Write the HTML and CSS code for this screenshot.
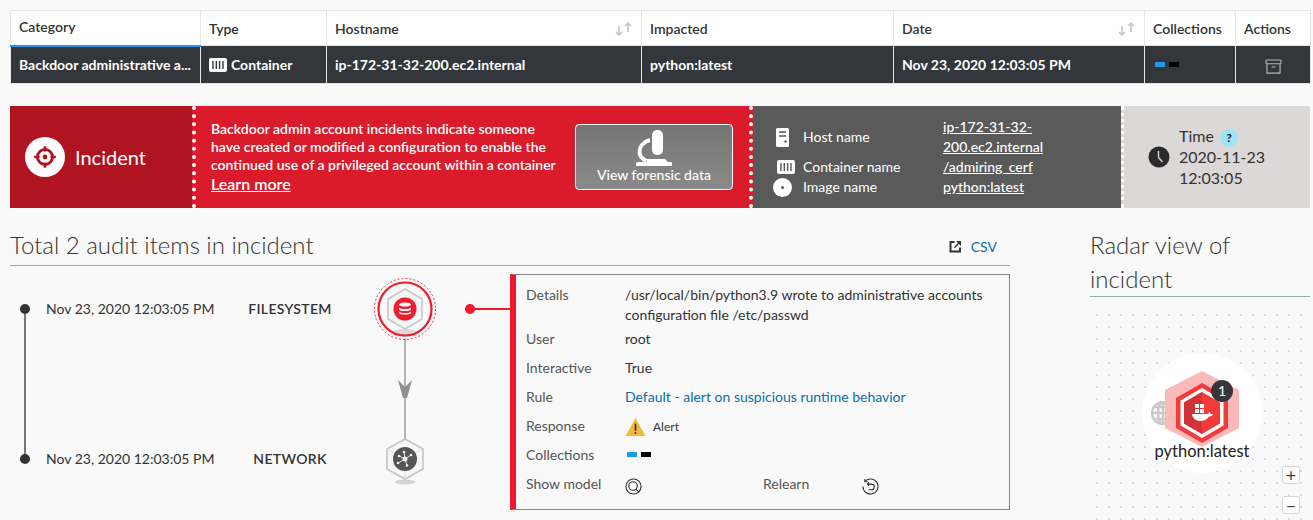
FILE: index.html
```html
<!DOCTYPE html>
<html>
	<head>
		<meta charset="utf-8">
		<title>Incident</title>
		<link rel="stylesheet" href="styles.css">
	</head>
	<body>
		<table class="grid">
			<colgroup>
				<col class="c1"><col class="c2"><col class="c3"><col class="c4"><col class="c5"><col class="c6"><col class="c7">
			</colgroup>
			<thead>
				<tr>
					<th class="active">Category</th>
					<th>Type</th>
					<th>Hostname<svg class="sort" viewBox="0 0 20 14"><path d="M5 4v9M2 10l3 3 3-3M14 10V1M11 4l3-3 3 3"/></svg></th>
					<th>Impacted</th>
					<th>Date<svg class="sort" viewBox="0 0 20 14"><path d="M5 4v9M2 10l3 3 3-3M14 10V1M11 4l3-3 3 3"/></svg></th>
					<th>Collections</th>
					<th>Actions</th>
				</tr>
			</thead>
			<tbody>
				<tr>
					<td>Backdoor administrative a...</td>
					<td>
						<span class="type">
							<svg class="ico-box" viewBox="0 0 18 14"><rect width="18" height="14" rx="2" fill="#fff"/><path d="M4 3v8M7.300 3v8M10.600 3v8M14 3v8" stroke="#33373b" stroke-width="1.400"/></svg>
							Container
						</span>
					</td>
					<td>ip-172-31-32-200.ec2.internal</td>
					<td>python:latest</td>
					<td>Nov 23, 2020 12:03:05 PM</td>
					<td><span class="tags"><i class="tag-blue"></i><i class="tag-black"></i></span></td>
					<td class="act">
						<svg class="ico-archive" viewBox="0 0 18 16"><rect x="1" y="1" width="16" height="4" rx="1"/><path d="M2 5v10h14V5M7 8.500h4"/></svg>
					</td>
				</tr>
			</tbody>
		</table>

		<div class="banner">
			<div class="b-title">
				<span class="target">
					<svg viewBox="0 0 24 24"><circle cx="12" cy="12" r="7" fill="none" stroke="#b01421" stroke-width="2.600"/><path d="M12 2v5M12 17v5M2 12h5M17 12h5" stroke="#b01421" stroke-width="2.400"/><circle cx="12" cy="12" r="2.200" fill="#b01421"/></svg>
				</span>
				Incident
			</div>
			<div class="b-desc">
				<div class="b-text">
					<p>Backdoor admin account incidents indicate someone have created or modified a configuration to enable the continued use of a privileged account within a container</p>
					<a href="#">Learn more</a>
				</div>
				<a class="forensic" href="#">
					<svg viewBox="0 0 38 36"><rect x="17" y="0" width="11" height="25" rx="5" fill="#fff"/><path d="M15 10C8 12 4.500 17 4.500 22c0 4 3 7 7 9" fill="none" stroke="#fff" stroke-width="4"/><path d="M12 29h18l3 3h3a1 1 0 0 1 1 1v3H1v-2a2 2 0 0 1 2-2h9z" fill="#fff"/></svg>
					View forensic data
				</a>
			</div>
			<div class="b-info">
				<svg class="ii-host" viewBox="0 0 13 19"><path d="M1.500 0h10A1.500 1.500 0 0 1 13 1.500v16a1.500 1.500 0 0 1-1.500 1.500h-10A1.500 1.500 0 0 1 0 17.500v-16A1.500 1.500 0 0 1 1.500 0z" fill="#fff"/><path d="M3 4h7M3 8h7" stroke="#5a5a5a" stroke-width="1.600"/><circle cx="9.500" cy="13.500" r="1.200" fill="#5a5a5a"/></svg>
				<span class="i-label i-host">Host name</span>
				<span class="i-val"><a href="#">ip-172-31-32-200.ec2.internal</a></span>
				<svg class="ii-box" viewBox="0 0 18 14"><rect width="18" height="14" rx="2" fill="#fff"/><path d="M4 3v8M7.300 3v8M10.600 3v8M14 3v8" stroke="#5a5a5a" stroke-width="1.400"/></svg>
				<span class="i-label">Container name</span>
				<span class="i-val"><a href="#">/admiring_cerf</a></span>
				<svg class="ii-disc" viewBox="0 0 19 19"><circle cx="9.500" cy="9.500" r="9.500" fill="#fff"/><circle cx="9.500" cy="9.500" r="1.500" fill="#5a5a5a"/></svg>
				<span class="i-label">Image name</span>
				<span class="i-val"><a href="#">python:latest</a></span>
			</div>
			<div class="b-time">
				<svg class="clock" viewBox="0 0 22 22"><circle cx="11" cy="11" r="10.500" fill="#2b2b2b"/><path d="M10.500 5v6.500l4 4.500" fill="none" stroke="#dcd8d8" stroke-width="1.400"/></svg>
				<div class="t-text">
					<div>Time <span class="help">?</span></div>
					<div>2020-11-23</div>
					<div>12:03:05</div>
				</div>
			</div>
		</div>

		<div class="lower">
			<div class="audit">
				<div class="head">
					<h2>Total 2 audit items in incident</h2>
					<a class="csv" href="#">
						<svg viewBox="0 0 13 13"><path d="M5.500 2H1.500v9.500H11V7.500" fill="none" stroke="#333" stroke-width="2"/><path d="M7 1h5v5L10 4 6 8 5 7l4-4z" fill="#333"/></svg>
						CSV
					</a>
				</div>
				<div class="flow">
					<div class="track">
						<div class="rail"></div>
						<div class="pipe"></div>
						<svg class="arrow" viewBox="0 0 14 18"><path d="M0 0l7 7 7-7-5 18H5z" fill="#8f8f8f"/></svg>
						<div class="event">
							<i class="dot"></i>
							<span class="when">Nov 23, 2020 12:03:05 PM</span>
							<span class="kind">FILESYSTEM</span>
							<span class="node">
								<svg viewBox="0 0 64 72" class="node-hot">
									<ellipse cx="32" cy="60" rx="13" ry="4" fill="#aaa" opacity=".4"/>
									<circle cx="32" cy="36" r="30.500" fill="none" stroke="#f2283c" stroke-width="1" stroke-dasharray="2 2"/>
									<circle cx="32" cy="36" r="26.500" fill="none" stroke="#f5182c" stroke-width="2.200"/>
									<path d="M32 16l17 10v20l-17 10-17-10V26z" fill="#f5f5f5" stroke="#c9c9c9" stroke-width="1.600"/>
									<circle cx="32" cy="36" r="11.500" fill="#ee1c2e"/>
									<ellipse cx="32" cy="31.500" rx="6" ry="2" fill="#fff"/>
									<path d="M26 34.500c1 2 11 2 12 0v2c-1 2-11 2-12 0zM26 38.500c1 2 11 2 12 0v1.500c-1 2-11 2-12 0z" fill="#fff"/>
								</svg>
							</span>
							<span class="tie"></span>
						</div>
						<div class="gap"></div>
						<div class="event">
							<i class="dot"></i>
							<span class="when">Nov 23, 2020 12:03:05 PM</span>
							<span class="kind">NETWORK</span>
							<span class="node">
								<svg viewBox="0 0 64 72" class="node-cold">
									<ellipse cx="32" cy="59" rx="10" ry="2.500" fill="#999" opacity=".4"/>
									<path d="M32 16l18 10v20L32 56 14 46V26z" fill="#f7f7f7" stroke="#c4c4c4" stroke-width="1.600"/>
									<path d="M32 36 14 26M32 36l18-10M32 36v20" stroke="#ddd" stroke-width="1"/>
									<circle cx="32" cy="36" r="12" fill="#555"/>
									<path d="M32 36l-6-3M32 36l6-4M32 36l-7 4M32 36l2 6.500M32 36l-1-7" stroke="#eee" stroke-width=".9"/>
									<circle cx="32" cy="36" r="2.500" fill="#eee"/>
									<circle cx="26" cy="33" r="1.300" fill="#eee"/><circle cx="38" cy="32" r="1.300" fill="#eee"/><circle cx="25" cy="40" r="1.300" fill="#eee"/><circle cx="34" cy="42.500" r="1.300" fill="#eee"/><circle cx="31" cy="29" r="1.300" fill="#eee"/>
								</svg>
							</span>
						</div>
					</div>
					<div class="card">
						<div class="line tall"><span class="k">Details</span><span class="v">/usr/local/bin/python3.9 wrote to administrative accounts configuration file /etc/passwd</span></div>
						<div class="line"><span class="k">User</span><span class="v">root</span></div>
						<div class="line"><span class="k">Interactive</span><span class="v">True</span></div>
						<div class="line"><span class="k">Rule</span><span class="v"><a href="#">Default - alert on suspicious runtime behavior</a></span></div>
						<div class="line"><span class="k">Response</span>
							<span class="v resp">
								<svg viewBox="0 0 22 20"><path d="M11 .500 21.500 19.500H.500z" fill="#f6b73c"/><path d="M11 6.500v7.500" stroke="#333" stroke-width="1.800"/><circle cx="11" cy="16.300" r="1" fill="#333"/></svg>
								<small>Alert</small>
							</span>
						</div>
						<div class="line"><span class="k">Collections</span><span class="v"><span class="tags"><i class="tag-blue"></i><i class="tag-black"></i></span></span></div>
						<div class="line"><span class="k">Show model</span>
							<span class="v model">
								<svg class="mini" viewBox="0 0 18 18"><circle cx="9" cy="9" r="8"/><circle cx="8.500" cy="8.500" r="4.500"/><path d="M11.500 12l3.500 3"/></svg>
								<span class="relearn">Relearn</span>
								<svg class="mini" viewBox="0 0 18 18"><path d="M3.300 3.400A8 8 0 1 1 1 9"/><path d="M3 1v3h3M5.500 6.500H10a3 3 0 0 1 0 6H7M5.500 6.500 7.500 4.800M5.500 6.500 7.500 8.200"/></svg>
							</span>
						</div>
					</div>
				</div>
			</div>
			<div class="radar">
				<h2>Radar view of incident</h2>
				<div class="canvas">
					<div class="halo"></div>
					<svg class="globe" viewBox="0 0 24 24"><circle cx="12" cy="12" r="11" fill="none" stroke="#c9c9c9" stroke-width="2.400"/><ellipse cx="12" cy="12" rx="5" ry="11" fill="none" stroke="#c9c9c9" stroke-width="2.400"/><path d="M1 12h22M3 6h18M3 18h18M12 1v22" stroke="#c9c9c9" stroke-width="2.400"/></svg>
					<svg class="hex" viewBox="0 0 74 76">
						<path d="M37 0l37 19v38L37 76 0 57V19z" fill="#fbb9b9"/>
						<path d="M37 12l26 15v30L37 72 11 57V27z" fill="#f53a3a"/>
						<path d="M37 17l21.500 12.500v25L37 67 15.500 54.500v-25z" fill="#fff"/>
						<path d="M37 21l18 10.500v21L37 63 19 52.500v-21z" fill="#f53a3a"/>
						<path d="M37 21 19 31.500v21L37 63z" fill="#cf3338"/>
						<path d="M30 33h4v4h-4zM35 33h4v4h-4zM30 38h4v4h-4zM35 38h4v4h-4z" fill="#fff"/>
						<path d="M27 43h16c.500-1 .800-1.600 1.500-2.200.500.800 1 1.400 1 2 1 0 1.700.2 2.500.6-1 1.600-2.500 2-4 2-1.500 2.600-5 4.600-9 4.600-4.500 0-7.500-3-8-7z" fill="#fff"/>
					</svg>
					<span class="count">1</span>
					<span class="img-name">python:latest</span>
					<button class="zoom plus">+</button>
					<button class="zoom minus">&minus;</button>
				</div>
			</div>
		</div>
	</body>
</html>
```

FILE: styles.css
```css
html{
	overflow: hidden;
}
body{
	margin: 0;
	padding: 10px 3px 0 10px;
	background: #f9f9f9;
	font-family: "Lato", "Liberation Sans", sans-serif;
	font-size: 14px;
	color: #333;
}
a{
	color: inherit;
}
h2{
	margin: 0;
	font-weight: 300;
	font-size: 24px;
	line-height: 34px;
	color: #333;
}

/* top table */
.grid{
	width: 1300px;
	border-collapse: collapse;
	table-layout: fixed;
}
.c1{ width: 190px; }
.c2{ width: 126px; }
.c3{ width: 315px; }
.c4{ width: 252px; }
.c5{ width: 251px; }
.c6{ width: 91px; }
.c7{ width: 75px; }
.grid th{
	position: relative;
	box-sizing: border-box;
	height: 35px;
	padding: 0 8px;
	background: #fff;
	border: 1px solid #e6e6e6;
	text-align: left;
	font-weight: 600;
	font-size: 14px;
	color: #333;
}
.grid th.active{
	border-bottom: 2px solid #1e9be8;
	padding-bottom: 2px;
}
.sort{
	position: absolute;
	right: 7px;
	top: 11px;
	width: 20px;
	height: 14px;
	fill: none;
	stroke: #c8c8c8;
	stroke-width: 1.700;
}
.grid td{
	box-sizing: border-box;
	height: 38px;
	padding: 0 8px;
	background: #33373b;
	border: 1px solid #e6e6e6;
	color: #fff;
	font-weight: 700;
	font-size: 14px;
	white-space: nowrap;
	overflow: hidden;
}
.type{
	display: flex;
	align-items: center;
	gap: 4px;
}
.ico-box{
	width: 18px;
	height: 14px;
}
.tags{
	display: flex;
	gap: 4px;
	margin-left: 2px;
}
.tags i{
	display: block;
	width: 10px;
	height: 5px;
}
.tag-blue{
	background: #1e9be8;
}
.tag-black{
	background: #000;
}
.grid td.act{
	text-align: center;
}
.ico-archive{
	display: block;
	margin: 3px auto 0;
	width: 17px;
	height: 15px;
	fill: none;
	stroke: #b5b5b5;
	stroke-width: 1.200;
}

/* banner */
.banner{
	display: flex;
	width: 1300px;
	height: 102px;
	margin-top: 22px;
	color: #fff;
}
.b-title{
	display: flex;
	align-items: center;
	gap: 10px;
	box-sizing: border-box;
	width: 182px;
	padding-left: 15px;
	background: #b01421;
	font-size: 20px;
}
.target{
	display: flex;
	align-items: center;
	justify-content: center;
	width: 40px;
	height: 40px;
	border-radius: 50%;
	background: #fff;
}
.target svg{
	width: 26px;
	height: 26px;
}
.b-desc{
	display: flex;
	align-items: center;
	box-sizing: border-box;
	width: 561px;
	padding: 0 16px 0 15px;
	background: #da1b2b;
	border-left: 4px dotted #fff;
	border-right: 4px dotted #fff;
	font-weight: 600;
	font-size: 14px;
	line-height: 18px;
}
.b-text{
	width: 346px;
}
.b-text p{
	margin: 0;
}
.b-text a{
	font-size: 16px;
	line-height: 20px;
}
.forensic{
	display: flex;
	flex-direction: column;
	align-items: center;
	justify-content: flex-end;
	box-sizing: border-box;
	width: 158px;
	height: 66px;
	margin-left: auto;
	padding-bottom: 6px;
	border: 1px solid #fff;
	border-radius: 4px;
	background: linear-gradient(#757575, #8a8a8a);
	text-decoration: none;
	font-size: 14px;
	font-weight: 500;
	line-height: 17px;
}
.forensic svg{
	width: 38px;
	height: 36px;
}
.b-info{
	display: grid;
	grid-template-columns: 30px 140px 1fr;
	grid-template-rows: auto auto auto;
	align-items: center;
	align-content: center;
	justify-items: start;
	box-sizing: border-box;
	width: 368px;
	padding-left: 20px;
	background: #5a5a5a;
	font-size: 14px;
	line-height: 20px;
}
.ii-host{
	width: 13px;
	height: 19px;
	margin-left: 3px;
}
.ii-box{
	width: 20px;
	height: 14px;
	margin-left: 3px;
}
.ii-disc{
	width: 19px;
	height: 19px;
}
.i-val{
	width: 105px;
	font-weight: 500;
}
.b-time{
	display: flex;
	align-items: center;
	gap: 9px;
	flex: 1;
	padding-left: 24px;
	background: #dcd8d8;
	border-left: 3px dotted #fff;
	color: #333;
	font-size: 16px;
	line-height: 20.500px;
}
.clock{
	width: 22px;
	height: 22px;
}
.help{
	display: inline-block;
	width: 18px;
	height: 18px;
	margin-left: 2px;
	border-radius: 50%;
	background: #9be5f5;
	color: #0d2233;
	font-size: 12px;
	font-weight: 700;
	line-height: 18px;
	text-align: center;
	vertical-align: 0;
}

/* lower part */
.lower{
	display: flex;
	gap: 80px;
	margin-top: 20px;
}
.audit{
	width: 1000px;
}
.head{
	display: flex;
	align-items: center;
	justify-content: space-between;
	padding: 0 13px 3px 0;
	border-bottom: 1px solid #9aa9ad;
}
.csv{
	display: flex;
	align-items: center;
	gap: 9px;
	color: #0a6ea8;
	text-decoration: none;
	font-size: 14px;
	margin-top: 3px;
}
.csv svg{
	width: 13px;
	height: 13px;
}
.flow{
	display: flex;
	margin-top: 8px;
}
.track{
	position: relative;
	width: 500px;
}
.rail{
	position: absolute;
	left: 14px;
	top: 35px;
	width: 2px;
	height: 150px;
	background: #777;
}
.pipe{
	position: absolute;
	left: 394px;
	top: 64px;
	width: 2px;
	height: 102px;
	background: #b3b3b3;
}
.arrow{
	position: absolute;
	left: 388px;
	top: 106px;
	width: 14px;
	height: 18px;
}
.event{
	position: relative;
	display: flex;
	align-items: center;
	height: 70px;
	padding-left: 10px;
}
.gap{
	height: 80px;
}
.dot{
	display: block;
	flex: none;
	width: 10px;
	height: 10px;
	margin-right: 16px;
	border-radius: 50%;
	background: #333;
}
.when{
	flex: none;
	width: 175px;
	padding-bottom: 2px;
	font-size: 14px;
}
.kind{
	flex: none;
	width: 138px;
	padding-bottom: 2px;
	font-size: 14px;
	font-weight: 600;
	letter-spacing: .3px;
	text-align: center;
}
.node{
	flex: none;
	display: flex;
	justify-content: center;
	width: 92px;
}
.node svg{
	display: block;
	width: 64px;
	height: 72px;
}
.tie{
	position: relative;
	flex: none;
	width: 45px;
	height: 2px;
	margin-left: 14px;
	background: #f5182c;
}
.tie::before{
	content: "";
	position: absolute;
	left: 0;
	top: -4px;
	width: 10px;
	height: 10px;
	border-radius: 50%;
	background: #f5182c;
}
.card{
	box-sizing: border-box;
	width: 500px;
	height: 236px;
	padding: 10px 10px 0 10px;
	border: 1px solid #888;
	border-left: 6px solid #f5182c;
	line-height: 20px;
}
.line{
	display: flex;
	height: 29px;
	align-items: center;
}
.line.tall{
	height: 39px;
	align-items: flex-start;
}
.k{
	flex: none;
	width: 99px;
	color: #555;
}
.v{
	flex: 1;
	color: #333;
}
.v a{
	color: #0a6ea8;
	text-decoration: none;
}
.resp{
	display: flex;
	align-items: center;
	gap: 7px;
	margin-top: 2px;
}
.resp svg{
	width: 21px;
	height: 20px;
}
.resp small{
	font-size: 12px;
}
.model{
	display: flex;
	align-items: center;
}
.mini{
	width: 17px;
	height: 17px;
	margin-top: 5px;
	fill: none;
	stroke: #333;
	stroke-width: 1.200;
}
.relearn{
	width: 99px;
	margin-left: 121px;
	color: #555;
}

/* radar */
.radar{
	width: 220px;
}
.radar h2{
	border-bottom: 1px solid #9aa9ad;
}
.canvas{
	position: relative;
	box-sizing: border-box;
	height: 224px;
	padding: 12px 5px 0 0;
	background-image: radial-gradient(circle, #dadada 1px, transparent 1.300px);
	background-size: 12px 12px;
	background-position: 1px 0;
	background-origin: content-box;
	background-clip: content-box;
}
.halo{
	position: absolute;
	left: 52px;
	top: 56px;
	width: 120px;
	height: 120px;
	border-radius: 50%;
	background: #fff;
}
.globe{
	position: absolute;
	left: 61px;
	top: 104px;
	width: 24px;
	height: 24px;
}
.hex{
	position: absolute;
	left: 75px;
	top: 74px;
	width: 74px;
	height: 76px;
}
.count{
	position: absolute;
	left: 121px;
	top: 83px;
	width: 22px;
	height: 22px;
	border-radius: 50%;
	background: #33373b;
	color: #fff;
	font-size: 14px;
	line-height: 22px;
	text-align: center;
}
.img-name{
	position: absolute;
	left: 52px;
	top: 144px;
	width: 120px;
	font-size: 16.500px;
	line-height: 20px;
	text-align: center;
	color: #222;
}
.zoom{
	position: absolute;
	left: 192px;
	width: 18px;
	height: 18px;
	padding: 0;
	border: 1px solid #d5d5d5;
	border-radius: 3px;
	background: #fff;
	font-family: "Lato", sans-serif;
	font-size: 18px;
	line-height: 14px;
	color: #444;
}
.plus{
	top: 169px;
}
.minus{
	top: 199px;
}
```
